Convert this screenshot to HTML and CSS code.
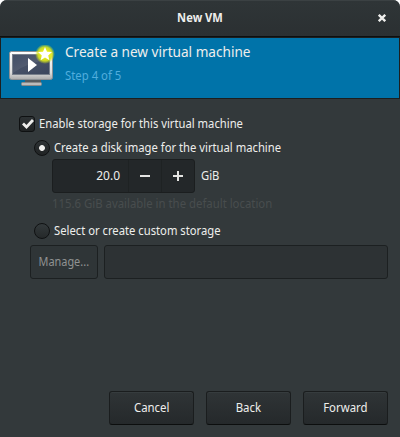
FILE: index.html
```
<!DOCTYPE html>
<html lang="en">
<head>
<meta charset="utf-8">
<title>New VM</title>
<link rel="stylesheet" href="styles.css">
</head>
<body>
<div class="window">
  <header class="titlebar">
    <span></span>
    <h1>New VM</h1>
    <button class="close" aria-label="Close"><svg width="8" height="8" viewBox="0 0 8 8"><path d="M.8.8 7.2 7.2M7.2.8.8 7.2" stroke="#eeeeec" stroke-width="2.300"/></svg></button>
  </header>
  <section class="banner">
    <svg class="icon" width="48" height="44" viewBox="0 0 48 44">
      <defs>
        <linearGradient id="frame" x2="0" y2="1"><stop stop-color="#fff"/><stop offset=".75" stop-color="#ddd"/><stop offset="1" stop-color="#aaa"/></linearGradient>
        <linearGradient id="screen" x2="1" y2="1"><stop stop-color="#34415b"/><stop offset=".5" stop-color="#465066"/><stop offset="1" stop-color="#3b465d"/></linearGradient>
        <radialGradient id="glow"><stop offset=".3" stop-color="#f2f21a"/><stop offset=".7" stop-color="#d9e51c" stop-opacity=".9"/><stop offset="1" stop-color="#c8df20" stop-opacity="0"/></radialGradient>
      </defs>
      <path d="M17 35h16v4H17z" fill="#555b60"/>
      <rect x="13.5" y="37.500" width="20" height="3" rx="1" fill="#bbb" stroke="#888"/>
      <rect x="1.5" y="6.500" width="43" height="28" rx="2" fill="url(#frame)" stroke="#8c9094"/>
      <rect x="4.5" y="9.500" width="37" height="20" fill="url(#screen)" stroke="#777f8b"/>
      <path d="M5 10h36v5Q20 17 5 28z" fill="#fff" opacity=".07"/>
      <path d="M20 13v14l9-7z" fill="#fff"/>
      <circle cx="37" cy="9" r="10" fill="url(#glow)"/>
      <path d="m37 2 2 4.700 5 .4-3.800 3.300 1.200 4.900-4.400-2.700-4.400 2.700 1.200-4.900L30 7.100l5-.4z" fill="#fff"/>
    </svg>
    <div class="heading">
      <h2>Create a new virtual machine</h2>
      <p>Step 4 of 5</p>
    </div>
  </section>
  <main>
    <div class="option enable">
      <span class="check"><svg width="14" height="14" viewBox="0 0 14 14"><path d="m3 6.500 3.500 3.500 6.500-7" fill="none" stroke="#eeeeec" stroke-width="2.800"/></svg></span>
      <span class="label">Enable storage for this virtual machine</span>
    </div>
    <div class="option create">
      <span class="radio on"></span>
      <span class="label">Create a disk image for the virtual machine</span>
    </div>
    <div class="size">
      <div class="spin">
        <span class="value">20.0</span>
        <span class="step"><svg width="10" height="10" viewBox="0 0 10 10"><path d="M0 4h10v2H0z" fill="#e4e4e2"/></svg></span>
        <span class="step"><svg width="10" height="10" viewBox="0 0 10 10"><path d="M0 4h4V0h2v4h4v2H6v4H4V6H0z" fill="#e4e4e2"/></svg></span>
      </div>
      <span class="label">GiB</span>
    </div>
    <p class="avail">115.6 GiB available in the default location</p>
    <div class="option select">
      <span class="radio"></span>
      <span class="label">Select or create custom storage</span>
    </div>
    <div class="custom">
      <span class="manage"><span>Manage...</span></span>
      <span class="entry"></span>
    </div>
  </main>
  <footer>
    <button class="btn"><span>Cancel</span></button>
    <button class="btn"><span>Back</span></button>
    <button class="btn"><span>Forward</span></button>
  </footer>
</div>
</body>
</html>
```
FILE: styles.css
```
* { box-sizing: border-box; }
body { margin: 0; background: #fff; }
h1, h2, p { margin: 0; font-weight: 400; }
button { font: inherit; padding: 0; border: 0; color: inherit; }
.window {
  width: 400px; height: 437px; overflow: hidden;
  display: flex; flex-direction: column;
  border-radius: 7px 7px 0 0;
  background: #33393b;
  color: #eeeeec;
  font: 12px/18px "Noto Sans", sans-serif;
  white-space: nowrap;
}
.titlebar {
  height: 37px; flex: none;
  display: grid; grid-template-columns: 36px 1fr 36px; align-items: center;
  background: linear-gradient(#2f3537, #2b3032);
  border-top: 1px solid #3b4143; border-bottom: 1px solid #0d0f10;
}
.titlebar h1 { font-size: 12px; font-weight: 700; text-align: center; padding-bottom: 2px; transform: scaleX(.93); }
.close { background: none; display: flex; justify-content: center; padding-bottom: 1px; }
.banner {
  height: 62px; flex: none; display: flex;
  border: 1px solid #1c1f1f;
  background: #0073a9;
}
.icon { margin: 7px 0 0 7px; }
.heading { margin: 4px 0 0 9px; }
h2 { font-size: 14px; line-height: 20px; transform: scaleX(.972); transform-origin: 0 0; }
.heading p { color: #51addd; margin-top: 5px; transform: scaleX(.945); transform-origin: 0 0; }
main { padding: 16px 12px 0 19px; flex: 1; }
.option { display: flex; align-items: center; height: 18px; }
.label { transform: scaleX(.937); transform-origin: 0 0; }
.check {
  width: 16px; height: 16px; margin-right: 4px; flex: none;
  border: 1px solid #0f1112; border-radius: 3px;
  background: linear-gradient(#2d3234, #202324);
}
.check svg { display: block; }
.radio {
  width: 16px; height: 16px; margin-right: 4px; flex: none;
  border: 1px solid #0f1112; border-radius: 50%;
  background: linear-gradient(#33393b, #25292a);
}
.radio.on { background: radial-gradient(circle, #eeeeec 2.500px, transparent 3.300px), linear-gradient(#2d3234, #202324); }
.create { margin: 6px 0 0 15px; }
.size { display: flex; align-items: center; gap: 6px; margin: 2px 0 0 33px; }
.spin {
  width: 143px; height: 34px; display: grid; grid-template-columns: 75px 33px 1fr;
  border: 1px solid #1b1e1f; border-radius: 3px; background: #232729;
}
.value { line-height: 32px; text-align: right; padding-right: 8px; }
.step { display: grid; place-items: center; border-left: 1px solid #1e2223; }
.avail { margin: 2px 0 0 33px; color: #484d4e; transform: scaleX(.947); transform-origin: 0 0; }
.select { margin: 9px 0 0 15px; }
.custom { display: flex; gap: 6px; margin: 5px 0 0 11px; }
.manage, .entry { height: 34px; border: 1px solid #1c2021; border-radius: 3px; background: #2f3537; }
.manage { width: 68px; display: grid; place-items: center; color: #8f9292; }
.manage span { transform: scaleX(.91); }
.entry { flex: 1; background: #2d3234; }
footer { display: flex; justify-content: flex-end; gap: 12px; padding: 0 12px 12px; }
.btn {
  width: 85px; height: 34px; line-height: 32px;
  border: 1px solid #1a1d1e; border-bottom-color: #0c0e0e; border-radius: 3px;
  background: linear-gradient(#2f3436, #25292b);
  box-shadow: inset 0 1px #363c3e;
}
.btn span { display: inline-block; transform: scaleX(.95); }
```
